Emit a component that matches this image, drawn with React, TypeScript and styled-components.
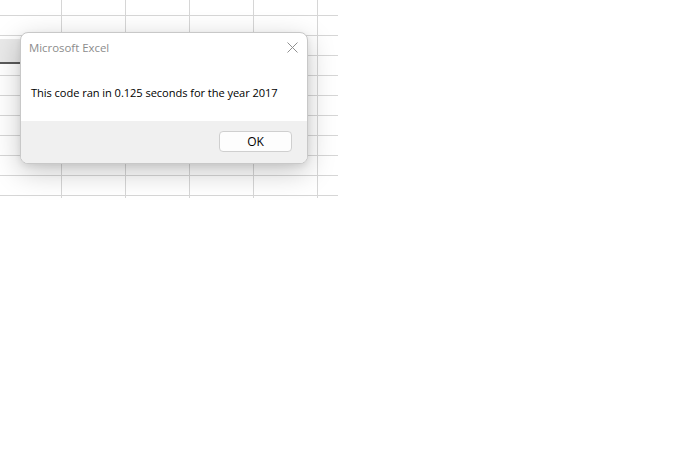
import React from 'react';
import styled, { createGlobalStyle } from 'styled-components';

const GlobalStyle = createGlobalStyle`
  html, body {
    margin: 0;
    padding: 0;
    background: #ffffff;
  }
  body {
    width: 694px;
    height: 464px;
    overflow: hidden;
    font-family: "Open Sans", "Noto Sans", sans-serif;
  }
`;

const Sheet = styled.div`
  position: relative;
  width: 338px;
  height: 198px;
  background-color: #ffffff;
  background-image:
    linear-gradient(to right, #d6d6d6 1px, transparent 1px),
    linear-gradient(to bottom, #d6d6d6 1px, transparent 1px);
  background-size: 64px 20px;
  background-position: 61px 15px;
`;

// grey strip on the left edge, partly hidden by the dialog
const SelectionStrip = styled.div`
  position: absolute;
  left: 0;
  top: 39px;
  width: 40px;
  height: 23px;
  background: #e9e9e9;
  border-bottom: 2px solid #5a5a5a;
`;

const Dialog = styled.div`
  position: absolute;
  left: 20px;
  top: 32px;
  width: 286px;
  height: 130px;
  display: flex;
  flex-direction: column;
  background: #ffffff;
  border: 1px solid #c8c8c8;
  border-radius: 8px;
  overflow: hidden;
  box-shadow: 0 8px 28px rgba(0, 0, 0, 0.22), 0 2px 6px rgba(0, 0, 0, 0.08);
`;

const TitleBar = styled.div`
  display: flex;
  align-items: center;
  justify-content: space-between;
  height: 28px;
  padding: 0 8px 0 8px;
`;

const Title = styled.span`
  font-size: 11.4px;
  color: #8c8c8c;
  padding-top: 1px;
`;

const CloseButton = styled.div`
  width: 14px;
  height: 14px;
  display: flex;
  align-items: center;
  justify-content: center;
  color: #909090;
`;

const Body = styled.div`
  flex: 1;
  display: flex;
  align-items: center;
  padding: 3px 10px 0 10px;
`;

const Message = styled.span`
  font-size: 11.1px;
  color: #000000;
  letter-spacing: -0.06px;
`;

const Footer = styled.div`
  height: 41px;
  display: flex;
  align-items: center;
  justify-content: flex-end;
  padding: 0 15px 1px 0;
  background: #f0f0f0;
`;

const Button = styled.button`
  width: 73px;
  height: 21px;
  padding: 0;
  background: #fdfdfd;
  border: 1px solid #cfcfcf;
  border-radius: 4px;
  font-family: inherit;
  font-size: 12px;
  color: #000000;
`;

const App: React.FC = () => {
  return (
    <>
      <GlobalStyle />
      <Sheet>
        <SelectionStrip />
        <Dialog>
          <TitleBar>
            <Title>Microsoft Excel</Title>
            <CloseButton>
              <svg width="11" height="11" viewBox="0 0 11 11">
                <path d="M0.5 0.5L10.5 10.5M10.5 0.5L0.5 10.5" stroke="currentColor" strokeWidth="1" fill="none" />
              </svg>
            </CloseButton>
          </TitleBar>
          <Body>
            <Message>This code ran in 0.125 seconds for the year 2017</Message>
          </Body>
          <Footer>
            <Button>OK</Button>
          </Footer>
        </Dialog>
      </Sheet>
    </>
  );
};

export default App;
